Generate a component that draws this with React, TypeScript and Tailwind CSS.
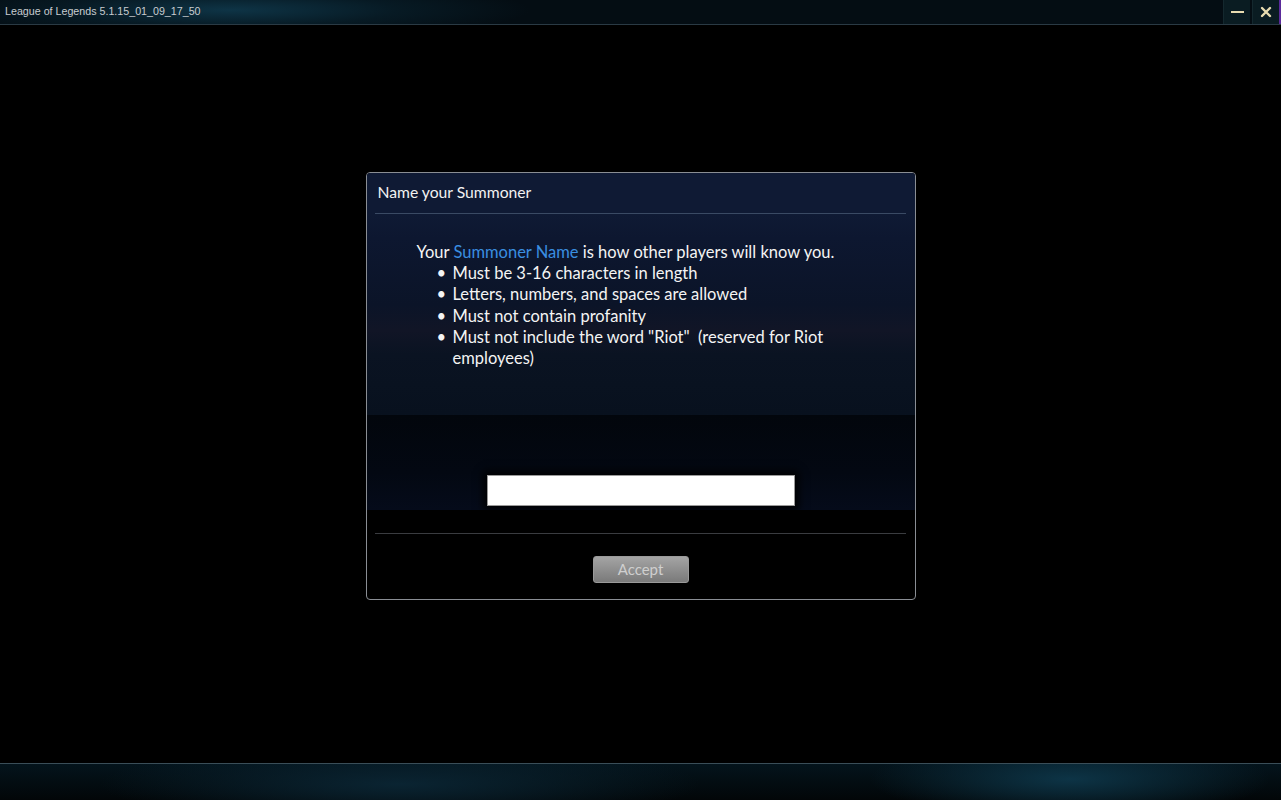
import React from "react";

export default function App() {
  const font = { fontFamily: "Lato, 'Open Sans', sans-serif" };
  return (
    <div className="w-[1281px] h-[800px] bg-black flex flex-col overflow-hidden relative">
      {/* Title bar */}
      <div className="h-[25px] shrink-0 flex items-stretch border-b border-[#2a3a44] bg-[radial-gradient(ellipse_300px_30px_at_230px_10px,#0e3446_0%,#071a24_55%,#040d13_100%)]">
        <div className="flex-1 pl-[5px] pt-[5px] text-[10.7px] leading-[13px] text-[#c8ccd0]" style={{ fontFamily: "'Liberation Sans', Arial, sans-serif" }}>
          League of Legends 5.1.15_01_09_17_50
        </div>
        <div className="w-[27px] bg-[#0a1c22] border-l border-[#14282e] flex items-center justify-center">
          <div className="w-[13px] h-[2px] bg-[#e8dcb0]" />
        </div>
        <div className="w-[2px]" />
        <div className="w-[27px] bg-[#0a1c22] border-l border-[#14282e] flex items-center justify-center">
          <svg width="12" height="12" viewBox="0 0 12 12">
            <path d="M2 2 L10 10 M10 2 L2 10" stroke="#e8dcb0" strokeWidth="2.4" strokeLinecap="round" />
          </svg>
        </div>
        <div className="w-[2px] bg-[#5a2a9a]" />
      </div>

      {/* Main area */}
      <div className="flex-1 flex justify-center pt-[147px]">
        <div className="w-[550px] h-[428px] border border-[#8a8e94] rounded-[4px] bg-black flex flex-col overflow-hidden" style={font}>
          <div className="h-[40px] shrink-0 bg-[#0f1a34] px-[11px] pt-[10px] text-[15.7px] leading-[19px] text-[#f2f2f2]">
            Name your Summoner
          </div>
          <div className="shrink-0 bg-[#0f1a34] pl-[8px] pr-[9px]">
            <div className="h-px bg-[#3a4a64]" />
          </div>
          <div className="h-[201px] shrink-0 bg-[linear-gradient(to_bottom,#0f1a34_0%,#0d1730_12%,#0b1428_45%,#111526_58%,#0a1322_70%,#08111e_100%)] pl-[50px] pt-[28px] text-[16.5px] leading-[21.2px] text-[#f4f4f4]">
            <div>
              Your <span className="text-[#3a8ee0]">Summoner Name</span> is how other players will know you.
            </div>
            <ul className="pl-[20px]">
              {[
                "Must be 3-16 characters in length",
                "Letters, numbers, and spaces are allowed",
                "Must not contain profanity",
                "Must not include the word \"Riot\"  (reserved for Riot employees)",
              ].map((t) => (
                <li key={t} className="flex">
                  <span className="w-[16px] shrink-0">•</span>
                  <span className="w-[385px] whitespace-pre-wrap">{t}</span>
                </li>
              ))}
            </ul>
          </div>
          <div className="h-[95px] shrink-0 bg-[linear-gradient(to_bottom,#02060c_0%,#030812_60%,#050b1a_100%)] flex items-end justify-center pb-[4px]">
            <div className="w-[308px] h-[31px] bg-white border border-[#9a9a9a] shadow-[0_0_8px_4px_rgba(0,0,0,0.9)]" />
          </div>
          <div className="h-[23px] shrink-0" />
          <div className="pl-[8px] pr-[9px] shrink-0">
            <div className="h-px bg-[#3a3c40]" />
          </div>
          <div className="flex justify-center pt-[22px]">
            <div className="w-[96px] h-[27px] rounded-[3px] border border-[#9a9a9a] bg-[linear-gradient(to_bottom,#a4a4a4,#7a7a7a)] flex items-center justify-center text-[15px] text-[#cfcfcf]">
              Accept
            </div>
          </div>
        </div>
      </div>

      {/* Bottom bar */}
      <div className="h-[37px] shrink-0 border-t border-[#3a4e58] bg-[radial-gradient(ellipse_200px_40px_at_1070px_15px,#0d3446_0%,transparent_100%),radial-gradient(ellipse_300px_40px_at_400px_20px,#0a2432_0%,transparent_100%),linear-gradient(to_bottom,#04141c,#020608)]" />
    </div>
  );
}
